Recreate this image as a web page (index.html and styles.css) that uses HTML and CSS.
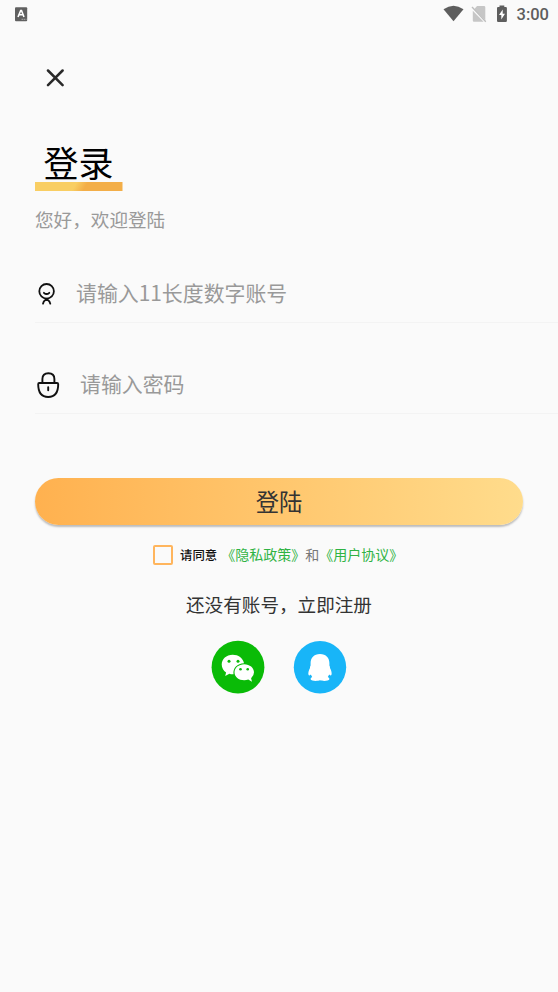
FILE: index.html
```html
<!DOCTYPE html>
<html lang="zh-CN">
<head>
<meta charset="utf-8">
<meta name="viewport" content="width=device-width, initial-scale=1">
<title>登录</title>
<link rel="stylesheet" href="styles.css">
</head>
<body>
<header class="status">
  <svg class="status-app" width="13" height="15" viewBox="0 0 13 15"><rect x="0" y="0.2" width="12.2" height="14" rx="1" fill="#606060"/><path d="M3 10 5.700 3.500h.8L9 10M4 7.800h4" fill="none" stroke="#fff" stroke-width="1.600"/><path d="M6.500 12.300h5" stroke="#aaa" stroke-width="1" stroke-dasharray="1.5 .6"/></svg>
  <div class="status-right">
    <svg width="21" height="17" viewBox="0 0 21 17"><path d="M.5 4.300Q10.500-3 20.500 4.300L10.500 16.300Z" fill="#5e5e5e"/></svg>
    <svg class="sim" width="16" height="18" viewBox="0 0 16 18"><path d="M6 1h7q1.300 0 1.300 1.300v13L3.400 4Z M1.800 5.800 12.600 16.800H3q-1.200 0-1.200-1.200Z" fill="#c6c6c6"/><path d="M1 2 14.800 16.800" stroke="#bdbdbd" stroke-width="1.300"/></svg>
    <svg class="battery" width="12" height="18" viewBox="0 0 12 18"><path d="M3.500 2V.5h4.800V2h1.500q1.100 0 1.100 1.100v12.700q0 1.200-1.100 1.200H2.100Q1 17 1 15.800V3.100Q1 2 2.100 2Z" fill="#5e5e5e"/><path d="M6.700 4.500 3 10h2.300v4.500L9 8.800H6.700Z" fill="#fff"/></svg>
    <span class="clock">3:00</span>
  </div>
</header>
<main class="page">
  <button class="close" aria-label="关闭"><svg width="18" height="18" viewBox="0 0 18 18"><path d="M2 1.500 16.600 16.100M16.600 1.500 2 16.100" stroke="#292929" stroke-width="2.500" stroke-linecap="round"/></svg></button>
  <h1 class="title">登录</h1>
  <p class="subtitle">您好，欢迎登陆</p>
  <div class="field field-account">
    <svg width="24" height="24" viewBox="0 0 24 24" fill="none" stroke="#111" stroke-width="1.800" stroke-linecap="round"><circle cx="11.600" cy="9.300" r="7.300"/><path d="M8.900 10.800Q11.600 13.300 14.300 10.800M8 21.700Q8.700 19 11.600 16.800Q14.500 19 15.300 21.700"/></svg>
    <span class="hint">请输入11长度数字账号</span>
  </div>
  <div class="field field-password">
    <svg width="26" height="28" viewBox="0 0 26 28" fill="none" stroke="#111" stroke-width="1.900" stroke-linecap="round"><path d="M7.400 13V9Q7.400 3.300 13.400 3.300T19.400 9V13M4.200 13H22Q23.200 13 23.200 14.300C23.200 22.500 19.500 27 13.200 27S3.200 22.500 3.200 14.300Q3.200 13 4.200 13ZM13.200 17.300V20.300"/></svg>
    <span class="hint">请输入密码</span>
  </div>
  <button class="submit">登陆</button>
  <div class="agree">
    <span class="check"></span>
    <span class="agree-label">请同意</span>
    <span class="links"><a>《隐私政策》</a>和<a>《用户协议》</a></span>
  </div>
  <p class="register">还没有账号，立即注册</p>
  <div class="social">
    <svg width="54" height="54" viewBox="0 0 54 54"><circle cx="27" cy="27.200" r="26.400" fill="#0abb07"/><g fill="#fff"><path d="M21.700 14.800C15.300 14.800 10.700 19.100 10.700 24.500C10.700 27.700 12.400 30.600 15.100 32.500L14.200 36L18.400 33.700Q20 34.300 22.500 34.200C21.700 28 26.300 23.300 33 23.200C31.900 18.100 27.400 14.800 21.700 14.800Z"/><path d="M33.200 24.200C27.700 24.200 23.500 27.800 23.500 32.300S27.700 40.300 33.200 40.300Q35.400 40.300 37.300 39.600L41 41.700L40.100 38.200Q43 35.800 43 32.300C43 27.800 38.700 24.200 33.200 24.200Z"/></g><g fill="#0abb07"><circle cx="18" cy="21.200" r="1.500"/><circle cx="27" cy="21.200" r="1.500"/><circle cx="29.500" cy="29.300" r="1.300"/><circle cx="36.700" cy="29.300" r="1.300"/></g></svg>
    <svg width="54" height="54" viewBox="0 0 54 54"><circle cx="27" cy="27.200" r="26.200" fill="#18b5f8"/><path fill="#fff" d="M27 14C20.800 14 17.600 18 17.600 23V25.500Q16.800 26.500 17 28C15.500 30.500 14.900 33.500 15.600 35Q16.200 36 17.800 34.500L19.200 37Q17.300 38 17.600 39.300C18.200 41.300 24.700 41.300 27 40.300C29.300 41.300 35.800 41.300 36.400 39.300Q36.700 38 34.800 37L36.200 34.500Q37.800 36 38.400 35C39.100 33.500 38.500 30.500 37 28Q37.200 26.500 36.400 25.500V23C36.400 18 33.200 14 27 14Z"/></svg>
  </div>
</main>
</body>
</html>
```
FILE: styles.css
```css
* { box-sizing: border-box; }
body {
  margin: 0;
  min-height: 992px;
  background: #fafafa;
  color: #333;
  font-family: "Noto Sans CJK SC", sans-serif;
}
svg { display: block; flex: none; }
button { border: 0; padding: 0; font-family: inherit; }
h1, p { margin: 0; font-weight: 400; }
.status {
  display: flex;
  justify-content: space-between;
  align-items: flex-start;
  height: 28px;
  padding: 5px 9px 0 15px;
}
.status-app { margin-top: 2px; }
.status-right { display: flex; }
.sim { margin-left: 7px; }
.battery { margin-left: 9px; }
.clock {
  margin-left: 9px;
  font: 500 16.5px/20px Roboto, sans-serif;
  color: #5e5e5e;
}
.page { padding: 41px 0 0 35px; }
.close { display: block; margin-left: 11px; background: none; }
.title {
  width: 88px;
  height: 53px;
  margin-top: 51px;
  padding-left: 8.5px;
  background: linear-gradient(120deg, #f9ce63 45%, #f3ae48 57%) 0 43.5px / 87.5px 9.5px no-repeat;
  color: #000;
  font-size: 35px;
  line-height: 47px;
}
.subtitle {
  margin-top: 14px;
  color: #999;
  font-size: 18.6px;
  line-height: 28px;
}
.field {
  display: flex;
  align-items: center;
  height: 60px;
  margin-top: 30px;
  border-bottom: 1px solid #f3f3f3;
}
.field svg { margin-top: 2px; }
.field .hint {
  margin-left: 17px;
  color: #999;
  font-size: 20.9px;
  line-height: 30px;
}
.field-account .hint { margin-top: -2px; }
.field-password { height: 61px; }
.field-password .hint { margin: -1px 0 0 19px; }
.submit {
  display: block;
  width: 488px;
  height: 47px;
  margin-top: 64px;
  border-radius: 24px;
  background: linear-gradient(90deg, #ffb14f, #ffdc8c);
  box-shadow: 0 2px 2px rgba(0, 0, 0, .25);
  color: #333;
  font-size: 23.3px;
  line-height: 45px;
}
.agree {
  display: flex;
  align-items: center;
  height: 20px;
  margin: 20px 0 0 118px;
  white-space: nowrap;
}
.check {
  width: 20px;
  height: 20px;
  border: 2px solid #ffb55d;
  border-radius: 2px;
}
.agree-label {
  margin-left: 7px;
  color: #111;
  font-size: 12.4px;
  font-weight: 500;
}
.links { margin: -2px 0 0 4px; color: #777; font-size: 14px; }
.links a { color: #2fb344; }
.register {
  width: 488px;
  margin-top: 25px;
  color: #333;
  font-size: 18.6px;
  line-height: 28px;
  text-align: center;
}
.social {
  display: flex;
  gap: 28px;
  margin: 22px 0 0 176px;
}
```
